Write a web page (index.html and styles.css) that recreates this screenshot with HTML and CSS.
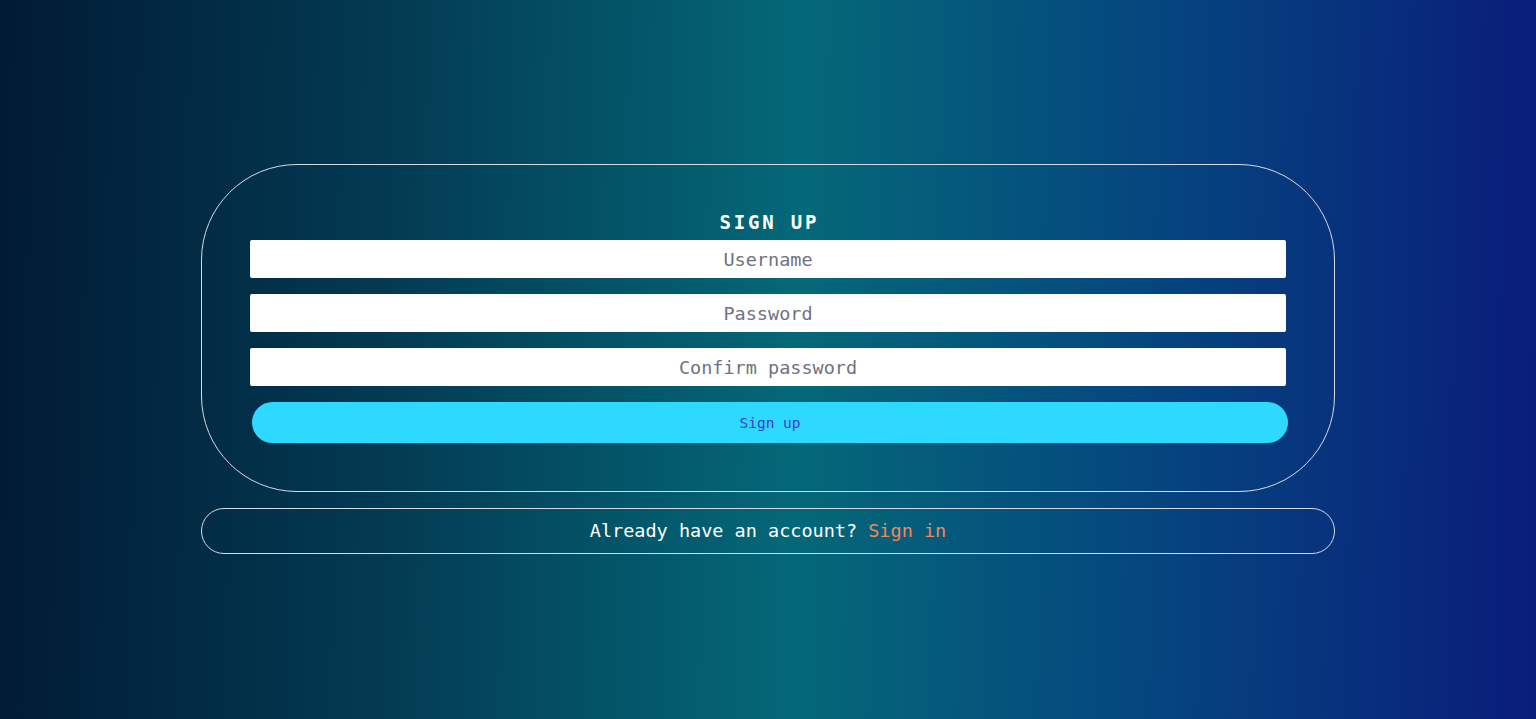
FILE: index.html
```html
<!DOCTYPE html>
<html lang="en">
<head>
<meta charset="utf-8">
<title>Sign up</title>
<link rel="stylesheet" href="styles.css">
</head>
<body>
<main class="page">
  <div class="stack">
    <form class="card">
      <h1 class="title">SIGN UP</h1>
      <input class="field" type="text" placeholder="Username">
      <input class="field" type="password" placeholder="Password">
      <input class="field" type="password" placeholder="Confirm password">
      <button class="submit" type="button">Sign up</button>
    </form>
    <p class="switch">Already have an account? <a class="link" href="#">Sign in</a></p>
  </div>
</main>
</body>
</html>
```
FILE: styles.css
```css
* { box-sizing: border-box; }
html, body {
  margin: 0;
  height: 100%;
}
body {
  font-family: "DejaVu Sans Mono", "Liberation Mono", monospace;
  color: #ffffff;
  background: linear-gradient(91deg, #011a35 0%, #033a52 25%, #046878 52%, #05447f 76%, #0a1c7a 100%);
}
.page {
  height: 100%;
  display: flex;
  align-items: center;
  justify-content: center;
}
.stack {
  width: 1134px;
  display: flex;
  flex-direction: column;
  gap: 16px;
  margin-bottom: 1px;
}
.card {
  border: 1px solid #d6dbe2;
  border-radius: 96px;
  padding: 48px;
  display: flex;
  flex-direction: column;
  gap: 16px;
}
.title {
  margin: -1px 0 -15px;
  height: 27px;
  line-height: 20px;
  font-size: 19px;
  font-weight: 700;
  letter-spacing: 2.8px;
  text-align: center;
  text-indent: 2.8px;
}
.field {
  display: block;
  width: 100%;
  height: 38px;
  border: none;
  border-radius: 2px;
  background: #ffffff;
  font-family: inherit;
  font-size: 18.5px;
  text-align: center;
  color: #333;
  outline: none;
}
.field::placeholder {
  color: #6f7282;
}
.submit {
  display: block;
  width: 100%;
  height: 41px;
  margin-left: 2px;
  border: none;
  border-radius: 21px;
  background: #2ed9ff;
  color: #3b3ccf;
  font-family: inherit;
  font-size: 14.5px;
  cursor: pointer;
}
.switch {
  margin: 0;
  height: 46px;
  border: 1px solid #d6dbe2;
  border-radius: 23px;
  line-height: 44px;
  text-align: center;
  font-size: 18.5px;
}
.link {
  color: #f4875d;
  text-decoration: none;
}
```
